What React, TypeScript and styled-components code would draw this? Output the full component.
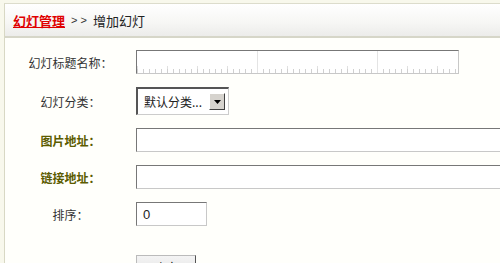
import React from 'react';
import styled, { createGlobalStyle } from 'styled-components';

const GlobalStyle = createGlobalStyle`
  html, body {
    margin: 0;
    padding: 0;
    background: #f8f8ec;
  }
  body {
    font-family: "Noto Sans CJK SC", "DejaVu Sans", sans-serif;
    font-size: 12px;
    color: #333;
  }
`;

type Field = {
  label: string;
  strong?: boolean;
  kind: 'ruler' | 'text' | 'select' | 'short';
  value?: string;
};

const fields: Field[] = [
  { label: '幻灯标题名称：', kind: 'ruler' },
  { label: '幻灯分类：', kind: 'select', value: '默认分类...' },
  { label: '图片地址：', strong: true, kind: 'text' },
  { label: '链接地址：', strong: true, kind: 'text' },
  { label: '排序：', kind: 'short', value: '0' },
];

export default function App() {
  return (
    <>
      <GlobalStyle />
      <Page>
        <Panel>
          <Header>
            <Crumb href="#">幻灯管理</Crumb>
            <Sep>&gt; &gt;</Sep>
            <Current>增加幻灯</Current>
          </Header>
          <Form>
            {fields.map((f) => (
              <Row key={f.label}>
                <Label $strong={!!f.strong}>{f.label}</Label>
                {f.kind === 'select' ? (
                  <Select>
                    <SelectText>{f.value}</SelectText>
                    <DropButton>
                      <svg width="7" height="4" viewBox="0 0 7 4">
                        <path d="M0 0h7L3.5 4z" fill="#000" />
                      </svg>
                    </DropButton>
                  </Select>
                ) : (
                  <Input $kind={f.kind}>{f.value}</Input>
                )}
              </Row>
            ))}
            <ButtonRow>
              <Submit>确定</Submit>
            </ButtonRow>
          </Form>
        </Panel>
      </Page>
    </>
  );
}

const Page = styled.div`
  padding: 3px 0 0 4px;
  height: 260px;
  overflow: hidden;
`;

const Panel = styled.div`
  border-top: 1px solid #dcdccc;
  border-left: 1px solid #d8d8c4;
  background: #fffffb;
  height: 100%;
  overflow: hidden;
`;

const Header = styled.div`
  height: 32px;
  display: flex;
  align-items: center;
  gap: 6px;
  padding-left: 8px;
  background: linear-gradient(#ffffff, #f6f6f4 60%, #ececea);
  border-bottom: 2px solid #d6d6c8;
`;

const Crumb = styled.a`
  color: #e00000;
  font-weight: bold;
  font-size: 13px;
  text-decoration: underline;
`;

const Sep = styled.span`
  font-family: "Liberation Sans", sans-serif;
  font-size: 11px;
  color: #333;
`;

const Current = styled.span`
  font-size: 13px;
  color: #222;
`;

const Form = styled.div`
  display: flex;
  flex-direction: column;
  gap: 13px;
  padding-top: 12px;
`;

const Row = styled.div`
  display: flex;
  align-items: center;
`;

const Label = styled.div<{ $strong: boolean }>`
  width: 131px;
  flex-shrink: 0;
  text-align: center;
  font-size: 12px;
  color: ${({ $strong }) => ($strong ? '#5c5c00' : '#333')};
  font-weight: ${({ $strong }) => ($strong ? 'bold' : 'normal')};
`;

const Input = styled.div<{ $kind: 'ruler' | 'text' | 'short' }>`
  box-sizing: border-box;
  height: 24px;
  border: 1px solid #c8c8c8;
  border-top-color: #777;
  border-left-color: #777;
  background: #fff;
  padding: 0 6px;
  display: flex;
  align-items: center;
  font-family: "Liberation Sans", sans-serif;
  font-size: 13px;
  color: #222;
  width: ${({ $kind }) =>
    $kind === 'ruler' ? '323px' : $kind === 'short' ? '71px' : '380px'};
  flex-shrink: 0;
  ${({ $kind }) =>
    $kind === 'ruler'
      ? `
    background:
      repeating-linear-gradient(90deg, #e4e4e4 0 1px, transparent 1px 120px) 120px 0 / 100% 100% no-repeat,
      repeating-linear-gradient(90deg, #d0d0d0 0 1px, transparent 1px 6px) 0 100% / 100% 4px no-repeat,
      repeating-linear-gradient(90deg, #e0e0e0 0 1px, transparent 1px 30px) 0 100% / 100% 7px no-repeat,
      #fff;
  `
      : ''}
`;

const Select = styled.div`
  box-sizing: border-box;
  width: 93px;
  height: 28px;
  flex-shrink: 0;
  border: 1px solid #ccc;
  border-top: 2px solid #555;
  border-left: 2px solid #555;
  background: #fff;
  display: flex;
  align-items: center;
  justify-content: space-between;
  padding: 0 3px 0 6px;
`;

const SelectText = styled.span`
  font-size: 12px;
  color: #222;
`;

const DropButton = styled.div`
  box-sizing: border-box;
  width: 16px;
  height: 17px;
  background: #d6d3ce;
  border: 1px solid #fff;
  border-right-color: #404040;
  border-bottom-color: #404040;
  display: flex;
  align-items: center;
  justify-content: center;
`;

const ButtonRow = styled.div`
  padding: 16px 0 0 131px;
`;

const Submit = styled.button`
  width: 60px;
  height: 24px;
  border: 1px solid #bbb;
  border-right-color: #555;
  border-bottom-color: #555;
  background: linear-gradient(#f4f4f4, #e0e0e0);
  font-family: "Noto Sans CJK SC", sans-serif;
  font-size: 12px;
  color: #000;
  padding: 0;
`;
